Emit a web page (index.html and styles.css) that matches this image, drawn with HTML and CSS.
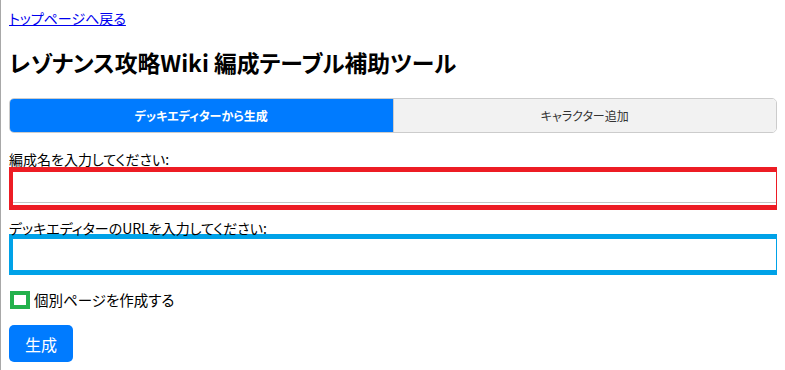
FILE: index.html
```html
<!DOCTYPE html>
<html lang="ja">
<head>
    <meta charset="UTF-8">
    <meta name="viewport" content="width=device-width, initial-scale=1.0">
    <title>レゾナンス攻略Wiki 編成テーブル補助ツール</title>
    <link rel="stylesheet" href="styles.css">
</head>
<body>
    <p class="back"><a href="#">トップページへ戻る</a></p>

    <h1 class="title">レゾナンス攻略Wiki 編成テーブル補助ツール</h1>

    <!-- モード切替 -->
    <div class="tabs">
        <button class="tab active">デッキエディターから生成</button>
        <button class="tab">キャラクター追加</button>
    </div>

    <label class="field-label" for="teamName">編成名を入力してください:</label>
    <div class="field field-red">
        <input type="text" id="teamName">
    </div>

    <label class="field-label second" for="deckUrl">デッキエディターのURLを入力してください:</label>
    <div class="field field-blue">
        <input type="text" id="deckUrl">
    </div>

    <label class="check-row">
        <span class="check-box"></span>
        個別ページを作成する
    </label>

    <button class="generate">生成</button>
</body>
</html>
```

FILE: styles.css
```css
html {
    border-left: 1px solid #a8a8a8;
}
body {
    margin: 8px;
    font-family: "Noto Sans CJK JP", "Noto Sans", sans-serif;
    font-feature-settings: "palt";
    font-size: 14.5px;
    line-height: 20px;
    color: #000;
}
.back {
    margin: 0;
    font-size: 14px;
    line-height: 20px;
}
.back a {
    color: #0000ee;
}
.title {
    font-size: 22.8px;
    line-height: 30px;
    font-weight: bold;
    margin: 20px 0 20px;
}
.tabs {
    display: flex;
    height: 35px;
    box-sizing: border-box;
    border: 1px solid #ccc;
    border-radius: 5px;
    overflow: hidden;
}
.tab {
    flex: 1;
    border: none;
    background-color: #f2f2f2;
    color: #333;
    font-family: inherit;
    font-feature-settings: "palt";
    font-size: 12px;
    padding: 0;
}
.tab + .tab {
    border-left: 1px solid #ccc;
}
.tab.active {
    background-color: #007bff;
    color: #fff;
    font-weight: bold;
}
.field-label {
    display: block;
    font-size: 14px;
    line-height: 16px;
    margin-top: 18px;
}
.field-label.second {
    margin-top: 10px;
}
.field {
    box-sizing: border-box;
    margin: 0 -4px 0 -1px;
    border: 5px solid;
    background: #fff;
}
.field input {
    display: block;
    box-sizing: border-box;
    width: 100%;
    height: 100%;
    border: none;
    outline: none;
    padding: 0 6px;
    font-size: 16px;
    background: transparent;
}
.field-red {
    height: 43px;
    border-color: #ed1c24;
    box-shadow: inset 0 -2px 0 #fff, inset 0 -3px 0 #c4c4c4;
}
.field-blue {
    height: 41px;
    margin-top: -2px;
    border-color: #00a2e8;
}
.check-row {
    display: flex;
    align-items: center;
    gap: 4px;
    line-height: 20px;
    margin-top: 15px;
}
.check-box {
    width: 12px;
    height: 10px;
    border: 4px solid #22b14c;
    background: #fff;
    margin-left: 1px;
}
.generate {
    display: block;
    margin-top: 15px;
    height: 37px;
    padding: 0 16px;
    border: none;
    border-radius: 5px;
    background-color: #007bff;
    color: #fff;
    font-family: inherit;
    font-size: 16px;
}
```
